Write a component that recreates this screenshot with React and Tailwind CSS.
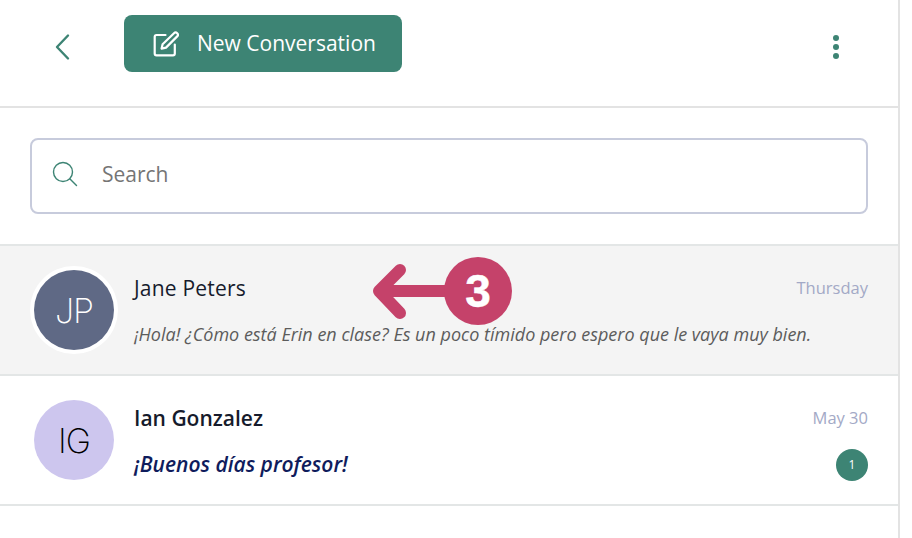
function ChevronIcon() {
  return (
    <svg width="20" height="30" viewBox="0 0 20 30" fill="none" stroke="currentColor" strokeWidth="2.4" strokeLinecap="round" strokeLinejoin="round">
      <path d="M16 3.5L5 15L16 26.5" />
    </svg>
  );
}

function EditIcon() {
  return (
    <svg width="26" height="26" viewBox="0 0 26 26" fill="none" stroke="currentColor" strokeWidth="2.2" strokeLinecap="round" strokeLinejoin="round">
      <path d="M12.5 4H3.5C2.4 4 1.7 4.7 1.7 5.8V22.5C1.7 23.6 2.4 24.3 3.5 24.3H20C21.1 24.3 21.8 23.6 21.8 22.5V13.5" />
      <path d="M21 2.2C21.9 1.3 23.3 1.3 24.2 2.2C25.1 3.1 25.1 4.5 24.2 5.4L13 16.6L8.6 17.6L9.6 13.2Z" />
    </svg>
  );
}

function SearchIcon() {
  return (
    <svg className="text-[#3d8474] -translate-y-[2px]" width="26" height="26" viewBox="0 0 26 26" fill="none" stroke="currentColor" strokeWidth="1.4" strokeLinecap="round">
      <circle cx="11" cy="11" r="9.5" />
      <path d="M18 18L24.5 24.5" />
    </svg>
  );
}

function Avatar({ initials, className }) {
  return (
    <div className={`w-20 h-20 rounded-full flex items-center justify-center shrink-0 text-[34px] font-extralight tracking-[-1px] font-['Inter',sans-serif] ${className}`}>
      {initials}
    </div>
  );
}

export default function App() {
  return (
    <div className="relative w-[912px] h-[538px] overflow-hidden bg-white font-['Open_Sans',sans-serif]">
      <div className="w-[900px] h-full border-r-2 border-[#e3e3e3]">

        {/* header */}
        <div className="h-[108px] border-b-2 border-[#e3e3e3] flex items-start">
          <div className="w-[124px] h-[94px] flex items-center justify-center text-[#3d8474]">
            <ChevronIcon />
          </div>
          <button className="mt-[15px] w-[278px] h-[57px] rounded-lg bg-[#3d8474] text-white flex items-center pl-[29px] gap-[18px] text-[21px]">
            <EditIcon />
            New Conversation
          </button>
          <div className="ml-auto mr-[59px] mt-[35px] flex flex-col gap-[3px]">
            <span className="w-[6px] h-[6px] rounded-full bg-[#3d8474]" />
            <span className="w-[6px] h-[6px] rounded-full bg-[#3d8474]" />
            <span className="w-[6px] h-[6px] rounded-full bg-[#3d8474]" />
          </div>
        </div>

        {/* search */}
        <div className="px-[30px] pt-[30px] pb-[30px]">
          <div className="h-[76px] border-2 border-[#c7cbdc] rounded-lg flex items-center pl-[20px] gap-[24px] text-[#757575] text-[21px]">
            <SearchIcon />
            <span className="-translate-y-px">Search</span>
          </div>
        </div>

        {/* conversations */}
        <div className="h-[132px] bg-[#f4f4f4] border-y-2 border-[#e3e6e6] flex pl-[34px] pr-[30px] pt-[24px]">
          <Avatar initials="JP" className="bg-[#5f6985] text-white ring-4 ring-white" />
          <div className="ml-5 flex-1 min-w-0">
            <div className="flex justify-between items-center h-[38px]">
              <span className="text-[21px] font-medium text-[#161b2c] tracking-[0.2px]">Jane Peters</span>
              <span className="text-[16.5px] text-[#a3a9c6] -translate-y-px">Thursday</span>
            </div>
            <p className="mt-[13px] text-[18px] italic text-[#5c5c5c]">¡Hola! ¿Cómo está Erin en clase? Es un poco tímido pero espero que le vaya muy bien.</p>
          </div>
        </div>
        <div className="h-[130px] border-b-2 border-[#e3e6e6] flex pl-[34px] pr-[30px] pt-[24px]">
          <Avatar initials="IG" className="bg-[#cdc6ee] text-black" />
          <div className="ml-5 flex-1 min-w-0">
            <div className="flex justify-between items-center h-[38px]">
              <span className="text-[21px] font-semibold text-[#161b2c]">Ian Gonzalez</span>
              <span className="text-[16.5px] text-[#a3a9c6] -translate-y-px">May 30</span>
            </div>
            <div className="mt-[11px] flex justify-between items-center">
              <p className="text-[21px] italic font-semibold text-[#0f1c5c]">¡Buenos días profesor!</p>
              <span className="w-8 h-8 rounded-full bg-[#3d8474] text-white text-[12px] flex items-center justify-center">1</span>
            </div>
          </div>
        </div>
      </div>

      {/* annotation */}
      <div className="absolute left-[372px] top-[257px] flex items-center">
        <svg width="90" height="70" viewBox="0 0 90 70" fill="none" stroke="#c5426a" strokeWidth="12" strokeLinecap="round" strokeLinejoin="round">
          <path d="M80 34H7M28 13L7 34L28 56" />
        </svg>
        <div className="absolute left-[72px] top-0 w-[68px] h-[68px] rounded-full bg-[#c5426a] text-white flex items-center justify-center text-[46px] font-bold [-webkit-text-stroke:0.5px_white] font-['Liberation_Sans',sans-serif]">3</div>
      </div>
    </div>
  );
}
